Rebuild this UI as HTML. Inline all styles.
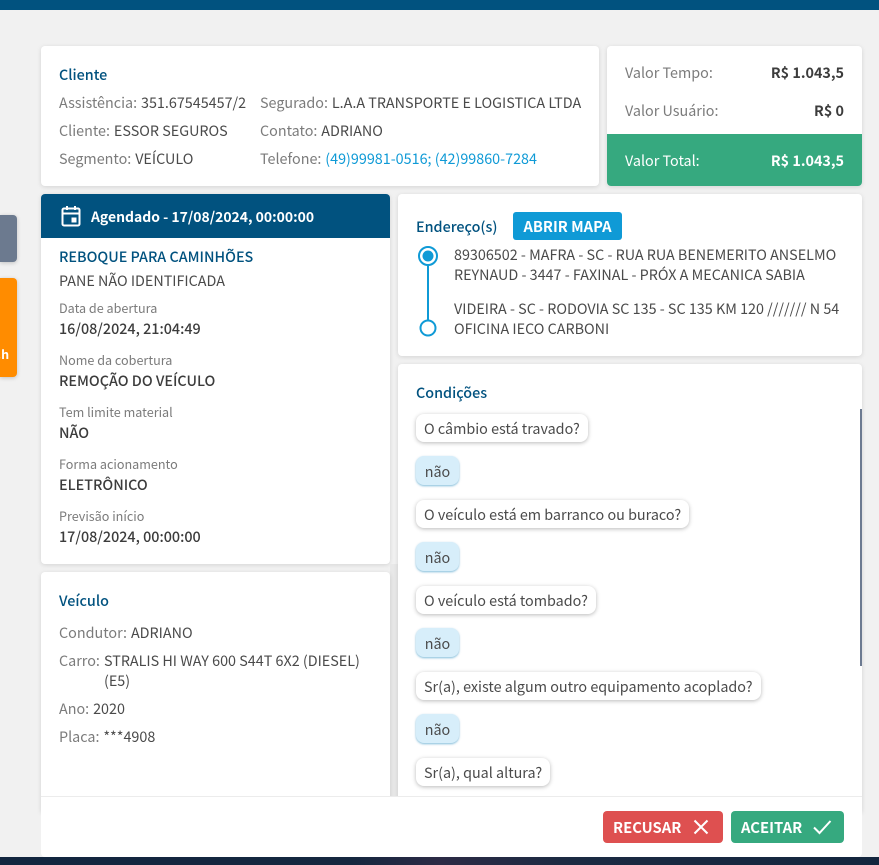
<!DOCTYPE html>
<html lang="pt-BR">
<head>
<meta charset="utf-8">
<title>Serviço</title>
<style>
*{box-sizing:border-box}
html,body{margin:0;padding:0;width:879px;height:865px;overflow:hidden;background:#f1f1f1}
body{position:relative;font-family:"Noto Sans CJK JP","Liberation Sans",sans-serif;font-size:14.35px;color:#4a4a4a}
.a{position:absolute}
.card{position:absolute;background:#fff;border-radius:4px;box-shadow:0 1px 5px rgba(0,0,0,.12)}
.t{position:absolute;white-space:nowrap;line-height:20px;height:20px}
.g{color:#7b7b7b}
.g span{margin-left:.7px}
.h{color:#01527f;font-weight:500}
.s{font-size:12.6px;color:#7b7b7b;margin-top:-1px}
.b{font-weight:500;color:#3c3c3c}
.q{position:absolute;left:416px;height:28px;line-height:29px;padding:0 8px;background:#fff;border-radius:8px;box-shadow:0 1px 4px rgba(0,0,0,.28);white-space:nowrap;color:#4a4a4a}
.r{position:absolute;left:416px;width:43px;height:29px;line-height:32px;text-align:center;background:#d7eefa;border-radius:8px;box-shadow:0 1px 2px rgba(0,120,180,.5);color:#4a4a4a}
</style>
</head>
<body>
<div class="a" style="left:0;top:0;width:879px;height:10px;background:#01527f"></div>
<div class="a" style="left:0;top:857px;width:879px;height:8px;background:linear-gradient(90deg,#12263f 0,#15273f 40%,#2c2a45 50%,#1b2a42 65%,#13263e 100%)"></div>

<div class="a" style="left:0;top:215px;width:17px;height:47px;background:#6c7a8f;border-radius:0 4px 4px 0;box-shadow:0 1px 4px rgba(0,0,0,.2)"></div>
<div class="a" style="left:0;top:278px;width:17px;height:99px;background:#ff8c00;border-radius:0 4px 4px 0;box-shadow:0 1px 4px rgba(0,0,0,.2)"></div>
<div class="t" style="left:-3px;top:344px;color:#fff;font-weight:700;font-size:12.5px">.h</div>

<!-- Cliente -->
<div class="card" style="left:41px;top:46px;width:558px;height:140px"></div>
<div class="t h" style="left:59px;top:65px">Cliente</div>
<div class="t g" style="left:59px;top:93px">Assistência: <span style="color:#4a4a4a">351.67545457/2</span></div>
<div class="t g" style="left:59px;top:121px">Cliente: <span style="color:#4a4a4a">ESSOR SEGUROS</span></div>
<div class="t g" style="left:59px;top:149px">Segmento: <span style="color:#4a4a4a">VEÍCULO</span></div>
<div class="t g" style="left:260px;top:93px">Segurado: <span style="color:#4a4a4a">L.A.A TRANSPORTE E LOGISTICA LTDA</span></div>
<div class="t g" style="left:260px;top:121px">Contato: <span style="color:#4a4a4a">ADRIANO</span></div>
<div class="t g" style="left:260px;top:149px">Telefone: <span style="color:#0f9ad6">(49)99981-0516; (42)99860-7284</span></div>

<!-- Valores -->
<div class="card" style="left:607px;top:46px;width:255px;height:140px;overflow:hidden">
  <div class="a" style="left:0;top:88px;width:255px;height:52px;background:#36a97f"></div>
</div>
<div class="t g" style="left:625px;top:63px">Valor Tempo:</div>
<div class="t b" style="right:35px;top:63px;font-weight:700">R$ 1.043,5</div>
<div class="t g" style="left:625px;top:101px">Valor Usuário:</div>
<div class="t b" style="right:35px;top:101px;font-weight:700">R$ 0</div>
<div class="t" style="left:625px;top:151px;color:#fff">Valor Total:</div>
<div class="t" style="right:35px;top:151px;color:#fff;font-weight:700">R$ 1.043,5</div>

<!-- Agendado -->
<div class="card" style="left:41px;top:194px;width:349px;height:370px;overflow:hidden">
  <div class="a" style="left:0;top:0;width:349px;height:44px;background:#01527f"></div>
</div>
<svg class="a" style="left:60px;top:204px" width="22" height="24" viewBox="0 0 22 24" fill="none">
  <rect x="2.5" y="4.5" width="17" height="17" rx="1.5" stroke="#fff" stroke-width="2"/>
  <path d="M2.5 9.5h17" stroke="#fff" stroke-width="2"/>
  <path d="M7 2v4M15 2v4" stroke="#fff" stroke-width="2"/>
  <rect x="11.5" y="13.5" width="5" height="5" fill="#fff"/>
</svg>
<div class="t" style="left:91px;top:207px;color:#fff;font-weight:700;font-size:13.95px">Agendado - 17/08/2024, 00:00:00</div>
<div class="t h" style="left:59px;top:247px">REBOQUE PARA CAMINHÕES</div>
<div class="t" style="left:59px;top:271px">PANE NÃO IDENTIFICADA</div>
<div class="t s" style="left:59px;top:299px">Data de abertura</div>
<div class="t b" style="left:59px;top:319px">16/08/2024, 21:04:49</div>
<div class="t s" style="left:59px;top:351px">Nome da cobertura</div>
<div class="t b" style="left:59px;top:371px">REMOÇÃO DO VEÍCULO</div>
<div class="t s" style="left:59px;top:403px">Tem limite material</div>
<div class="t b" style="left:59px;top:423px">NÃO</div>
<div class="t s" style="left:59px;top:455px">Forma acionamento</div>
<div class="t b" style="left:59px;top:475px">ELETRÔNICO</div>
<div class="t s" style="left:59px;top:507px">Previsão início</div>
<div class="t b" style="left:59px;top:527px">17/08/2024, 00:00:00</div>

<!-- Veículo -->
<div class="a" style="left:390px;top:564px;width:8px;height:232px;background:#e8e8e8"></div>
<div class="card" style="left:41px;top:572px;width:349px;height:240px;border-radius:4px 4px 0 0"></div>
<div class="t h" style="left:59px;top:591px">Veículo</div>
<div class="t g" style="left:59px;top:623px">Condutor: <span style="color:#4a4a4a">ADRIANO</span></div>
<div class="t g" style="left:59px;top:651px">Carro:</div>
<div class="t" style="left:104px;top:651px">STRALIS HI WAY 600 S44T 6X2 (DIESEL)</div>
<div class="t" style="left:104px;top:671px">(E5)</div>
<div class="t g" style="left:59px;top:699px">Ano: <span style="color:#4a4a4a">2020</span></div>
<div class="t g" style="left:59px;top:727px">Placa: <span style="color:#4a4a4a">***4908</span></div>

<!-- Endereços -->
<div class="card" style="left:398px;top:194px;width:464px;height:162px"></div>
<div class="t h" style="left:416px;top:217px">Endereço(s)</div>
<div class="a" style="left:513px;top:212px;width:109px;height:28px;line-height:29px;text-align:center;background:#0f9ad6;color:#fff;font-weight:700;font-size:14.7px;border-radius:3px;white-space:nowrap">ABRIR MAPA</div>
<svg class="a" style="left:416px;top:244px" width="24" height="94" viewBox="0 0 24 94" fill="none">
  <path d="M12 20V76" stroke="#0f9ad6" stroke-width="2"/>
  <circle cx="12" cy="12" r="9" stroke="#0f9ad6" stroke-width="2" fill="#fff"/>
  <circle cx="12" cy="12" r="5.5" fill="#0f9ad6"/>
  <circle cx="12" cy="84" r="7.5" stroke="#0f9ad6" stroke-width="2" fill="#fff"/>
</svg>
<div class="t" style="left:454px;top:245px">89306502 - MAFRA - SC - RUA RUA BENEMERITO ANSELMO</div>
<div class="t" style="left:454px;top:265px">REYNAUD - 3447 - FAXINAL - PRÓX A MECANICA SABIA</div>
<div class="t" style="left:454px;top:299px">VIDEIRA - SC - RODOVIA SC 135 - SC 135 KM 120 /////// N 54</div>
<div class="t" style="left:454px;top:319px">OFICINA IECO CARBONI</div>

<!-- Condições -->
<div class="card" style="left:398px;top:364px;width:464px;height:448px;border-radius:4px 4px 0 0"></div>
<div class="t h" style="left:416px;top:383px">Condições</div>
<div class="a" style="left:860px;top:409px;width:2px;height:257px;background:#6c7a91"></div>
<div class="q" style="top:414px">O câmbio está travado?</div>
<div class="r" style="top:456px">não</div>
<div class="q" style="top:500px">O veículo está em barranco ou buraco?</div>
<div class="r" style="top:542px">não</div>
<div class="q" style="top:586px">O veículo está tombado?</div>
<div class="r" style="top:628px">não</div>
<div class="q" style="top:672px">Sr(a), existe algum outro equipamento acoplado?</div>
<div class="r" style="top:714px">não</div>
<div class="q" style="top:758px">Sr(a), qual altura?</div>

<!-- Rodapé -->
<div class="a" style="left:41px;top:796px;width:821px;height:61px;background:#fff;border-top:1px solid #ececec;border-radius:0 0 4px 4px"></div>
<div class="a" style="left:603px;top:811px;width:120px;height:32px;background:#de5050;border-radius:4px"></div>
<div class="t" style="left:613px;top:818px;color:#fff;font-weight:700;font-size:14.8px">RECUSAR</div>
<svg class="a" style="left:692px;top:818px" width="18" height="18" viewBox="0 0 18 18" fill="none">
  <path d="M2.5 2.5l13 13M15.5 2.5l-13 13" stroke="#fff" stroke-width="2"/>
</svg>
<div class="a" style="left:731px;top:811px;width:113px;height:32px;background:#36a97f;border-radius:4px"></div>
<div class="t" style="left:741px;top:818px;color:#fff;font-weight:700;font-size:14.8px">ACEITAR</div>
<svg class="a" style="left:812px;top:818px" width="20" height="18" viewBox="0 0 20 18" fill="none">
  <path d="M2 9.5l5.5 5.5L18.5 3" stroke="#fff" stroke-width="2"/>
</svg>
</body>
</html>
